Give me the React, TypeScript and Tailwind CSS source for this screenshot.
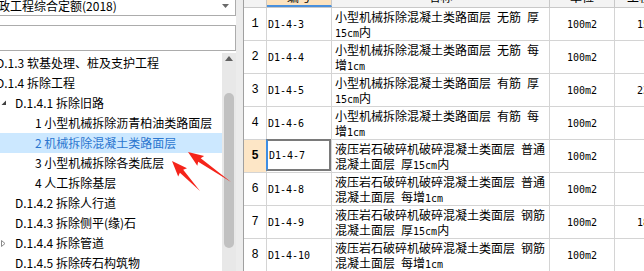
import React from 'react';

type TreeItem = {
  level: 0 | 1 | 2;
  text: string;
  marker?: 'open' | 'closed';
  selected?: boolean;
};

const treeItems: TreeItem[] = [
  { level: 0, text: 'D.1.3 软基处理、桩及支护工程' },
  { level: 0, text: 'D.1.4 拆除工程' },
  { level: 1, text: 'D.1.4.1 拆除旧路', marker: 'open' },
  { level: 2, text: '1 小型机械拆除沥青柏油类路面层' },
  { level: 2, text: '2 机械拆除混凝土类路面层', selected: true },
  { level: 2, text: '3 小型机械拆除各类底层' },
  { level: 2, text: '4 人工拆除基层' },
  { level: 1, text: 'D.1.4.2 拆除人行道' },
  { level: 1, text: 'D.1.4.3 拆除侧平(缘)石' },
  { level: 1, text: 'D.1.4.4 拆除管道', marker: 'closed' },
  { level: 1, text: 'D.1.4.5 拆除砖石构筑物' },
];

type Row = { n: number; code: string; l1: string; l2: string; q?: string };

const rows: Row[] = [
  { n: 1, code: 'D1-4-3', l1: '小型机械拆除混凝土类路面层 无筋 厚', l2: '15cm内', q: '15.62' },
  { n: 2, code: 'D1-4-4', l1: '小型机械拆除混凝土类路面层 无筋 每', l2: '增1cm' },
  { n: 3, code: 'D1-4-5', l1: '小型机械拆除混凝土类路面层 有筋 厚', l2: '15cm内', q: '23.18' },
  { n: 4, code: 'D1-4-6', l1: '小型机械拆除混凝土类路面层 有筋 每', l2: '增1cm' },
  { n: 5, code: 'D1-4-7', l1: '液压岩石破碎机破碎混凝土类面层 普通', l2: '混凝土面层 厚15cm内' },
  { n: 6, code: 'D1-4-8', l1: '液压岩石破碎机破碎混凝土类面层 普通', l2: '混凝土面层 每增1cm' },
  { n: 7, code: 'D1-4-9', l1: '液压岩石破碎机破碎混凝土类面层 钢筋', l2: '混凝土面层 厚15cm内', q: '18.24' },
  { n: 8, code: 'D1-4-10', l1: '液压岩石破碎机破碎混凝土类面层 钢筋', l2: '混凝土面层 每增1cm' },
];

// SimSun-like look: CJK at 12px, latin half width (6px)
const Mixed = ({ s }: { s: string }) => (
  <div className="h-[14px] flex items-baseline whitespace-nowrap">
    {s
      .split(/([\u4e00-\u9fff]+)/)
      .filter(Boolean)
      .map((p, i) =>
        /[\u4e00-\u9fff]/.test(p) ? (
          <span key={i} className="font-['Noto_Sans_CJK_SC',sans-serif] text-[12px] leading-[14px]">
            {p}
          </span>
        ) : (
          <span key={i} className="font-['DejaVu_Sans_Mono',monospace] text-[10px] leading-[14px] whitespace-pre">
            {p}
          </span>
        )
      )}
  </div>
);

const arrowPoints = (tx: number, ty: number, hx: number, hy: number) => {
  const dx = hx - tx;
  const dy = hy - ty;
  const len = Math.sqrt(dx * dx + dy * dy);
  const ux = dx / len;
  const uy = dy / len;
  const nx = -uy;
  const ny = ux;
  const headLen = 14;
  const headHalf = 6;
  const shaftHalf = 2.2;
  const bx = hx - ux * headLen;
  const by = hy - uy * headLen;
  const pts = [
    [tx, ty],
    [bx + nx * shaftHalf, by + ny * shaftHalf],
    [bx - ux * 1.5 + nx * headHalf, by - uy * 1.5 + ny * headHalf],
    [hx, hy],
    [bx - ux * 1.5 - nx * headHalf, by - uy * 1.5 - ny * headHalf],
    [bx - nx * shaftHalf, by - ny * shaftHalf],
  ];
  return pts.map((p) => `${p[0].toFixed(1)},${p[1].toFixed(1)}`).join(' ');
};

const TreeRow = ({ item }: { item: TreeItem }) => {
  const color = item.selected ? 'bg-[#cce8ff] text-[#2b76cf]' : 'text-black';
  return (
    <div className={`h-[20px] flex items-center whitespace-nowrap text-[12px] leading-[20px] ${color}`}>
      {item.level === 0 && <span className="-ml-[4px]">{item.text}</span>}
      {item.level === 1 && (
        <>
          <span className="w-[15px] shrink-0 flex items-center pl-[1px]">
            {item.marker === 'open' && (
              <svg width="6" height="6" viewBox="0 0 6 6">
                <polygon points="5,0.5 5,5 0.5,5" fill="#404040" />
              </svg>
            )}
            {item.marker === 'closed' && (
              <svg width="5" height="7" viewBox="0 0 5 7">
                <polygon points="0.5,0.5 4,3.5 0.5,6.5" fill="none" stroke="#8a8a8a" strokeWidth="1" />
              </svg>
            )}
          </span>
          <span>{item.text}</span>
        </>
      )}
      {item.level === 2 && <span className="pl-[35px]">{item.text}</span>}
    </div>
  );
};

export default function App() {
  return (
    <div className="relative w-[644px] h-[271px] overflow-hidden bg-white flex font-['Noto_Sans_CJK_SC',sans-serif]">
      {/* left: quota tree */}
      <div className="w-[236px] shrink-0 flex flex-col">
        <div className="h-[16px] border-b border-r border-[#acacac] flex items-start justify-between">
          <span className="-ml-[14px] text-[12px] leading-[12px] whitespace-nowrap text-black">
            市政工程综合定额(2018)
          </span>
          <svg width="7" height="4" viewBox="0 0 7 4" className="mt-[4px] mr-[6px]">
            <polygon points="0,0 7,0 3.5,4" fill="#6a6a6a" />
          </svg>
        </div>
        <div className="mt-[9px] h-[26px] border-t border-b border-r border-[#acacac]" />
        <div className="mt-[2px] flex-1 flex min-h-0">
          <div className="w-[222px] shrink-0 overflow-hidden">
            {treeItems.map((it, i) => (
              <TreeRow key={i} item={it} />
            ))}
          </div>
          <div className="w-[14px] shrink-0 bg-[#e8e8e8] flex flex-col items-center">
            <svg width="8" height="5" viewBox="0 0 8 5" className="mt-[3px]">
              <polygon points="4,0 8,5 0,5" fill="#606060" />
            </svg>
            <div className="mt-[32px] w-[10px] h-[155px] rounded-full bg-[#c1c1c1]" />
          </div>
        </div>
      </div>

      {/* splitter */}
      <div className="w-[7px] shrink-0 bg-[#ececec]" />

      {/* right: quota grid */}
      <div className="flex-1 border-l border-[#a0a0a0] flex flex-col text-black">
        <div className="h-[8px] shrink-0 flex border-b border-[#c8c8c8] bg-[#f3f3f3] overflow-hidden">
          <div className="w-[23px] shrink-0 border-r border-[#c8c8c8]" />
          <div className="w-[65px] shrink-0 border-r border-[#c8c8c8] bg-[#fde3bf] border-b-2 border-b-[#4a90dc] flex justify-center">
            <span className="-mt-[9px] text-[12px] leading-[12px]">编号</span>
          </div>
          <div className="w-[218px] shrink-0 border-r border-[#c8c8c8] flex justify-center">
            <span className="-mt-[9px] text-[12px] leading-[12px]">名称</span>
          </div>
          <div className="w-[65px] shrink-0 border-r border-[#c8c8c8] flex justify-center">
            <span className="-mt-[9px] text-[12px] leading-[12px]">单位</span>
          </div>
          <div className="flex-1 pl-[12px]">
            <span className="block -mt-[9px] text-[12px] leading-[12px] whitespace-nowrap">工程量</span>
          </div>
        </div>
        {rows.map((r) => {
          const sel = r.n === 5;
          return (
            <div key={r.n} className="h-[33px] shrink-0 flex border-b border-[#d4d4d4]">
              <div
                className={`w-[23px] shrink-0 border-r border-[#d4d4d4] flex items-center justify-center font-['Liberation_Mono',monospace] text-[12px] ${
                  sel ? 'bg-[#fde6c6] font-bold' : ''
                }`}
              >
                {r.n}
              </div>
              <div className="w-[65px] shrink-0 border-r border-[#d4d4d4]">
                <div
                  className={`h-full flex items-center pl-[1px] font-['DejaVu_Sans_Mono',monospace] text-[10px] ${
                    sel ? 'border-2 border-[#7a7a7a] border-l-[#3d8de3] -ml-[1px] -mt-[1px] h-[34px] w-[65px]' : ''
                  }`}
                >
                  {r.code}
                </div>
              </div>
              <div className="w-[218px] shrink-0 border-r border-[#d4d4d4] pl-[3px] flex flex-col justify-center gap-[1px] overflow-hidden">
                <Mixed s={r.l1} />
                <Mixed s={r.l2} />
              </div>
              <div className="w-[65px] shrink-0 border-r border-[#d4d4d4] flex items-center justify-center font-['DejaVu_Sans_Mono',monospace] text-[10px]">
                100m2
              </div>
              <div className="flex-1 flex items-center pl-[22px] font-['DejaVu_Sans_Mono',monospace] text-[10px] whitespace-nowrap overflow-hidden">
                {r.q ?? ''}
              </div>
            </div>
          );
        })}
      </div>

      {/* red annotation arrows */}
      <svg className="absolute left-0 top-0 pointer-events-none" width="644" height="271" viewBox="0 0 644 271">
        <polygon points={arrowPoints(231, 182, 188, 152)} fill="#f5241a" />
        <polygon points={arrowPoints(200, 191, 172, 161)} fill="#f5241a" />
      </svg>
    </div>
  );
}
